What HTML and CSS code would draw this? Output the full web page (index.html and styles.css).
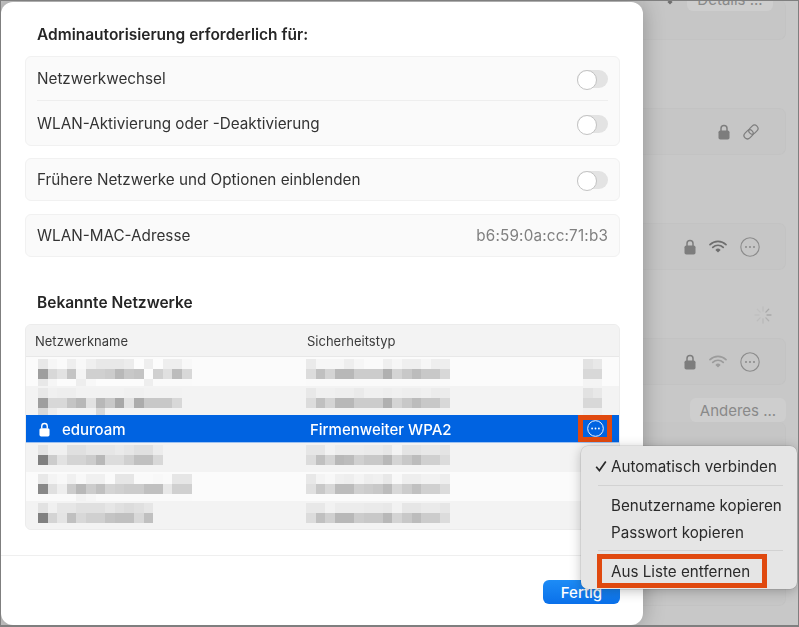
FILE: index.html
```html
<!DOCTYPE html>
<html lang="de">
<head>
<meta charset="utf-8">
<title>WLAN</title>
<link rel="stylesheet" href="styles.css">
</head>
<body>
<svg class="defs" width="0" height="0" aria-hidden="true">
  <symbol id="lock" viewBox="0 0 12 16"><path d="M3 7V4.4a3 3 0 0 1 6 0V7" fill="none" stroke="currentColor" stroke-width="1.5"/><rect x="0.5" y="6.5" width="11" height="9" rx="1.8" fill="currentColor"/></symbol>
  <symbol id="wifi" viewBox="0 0 18 13"><path d="M1 4.6a11.4 11.4 0 0 1 16 0M3.8 7.4a7.4 7.4 0 0 1 10.4 0" fill="none" stroke="currentColor" stroke-width="1.7" stroke-linecap="round"/><path d="M6.4 9.9a3.7 3.7 0 0 1 5.2 0L9 12.6z" fill="currentColor"/></symbol>
  <symbol id="more" viewBox="0 0 20 20"><circle cx="10" cy="10" r="9.2" fill="none" stroke="currentColor" stroke-width="1.1"/><circle cx="6" cy="10" r="1.05" fill="currentColor"/><circle cx="10" cy="10" r="1.05" fill="currentColor"/><circle cx="14" cy="10" r="1.05" fill="currentColor"/></symbol>
</svg>
<div class="stage">
  <main class="sheet">
    <h2 class="heading">Adminautorisierung erforderlich für:</h2>
    <section class="card card-first">
      <div class="row"><span>Netzwerkwechsel</span><span class="toggle"></span></div>
      <div class="row row-ruled"><span>WLAN-Aktivierung oder -Deaktivierung</span><span class="toggle"></span></div>
    </section>
    <section class="card card-second">
      <div class="row"><span>Frühere Netzwerke und Optionen einblenden</span><span class="toggle"></span></div>
    </section>
    <section class="card">
      <div class="row"><span>WLAN-MAC-Adresse</span><span class="muted">b6:59:0a:cc:71:b3</span></div>
    </section>
    <h2 class="heading heading-known">Bekannte Netzwerke</h2>
    <section class="table">
      <div class="thead"><span>Netzwerkname</span><span>Sicherheitstyp</span></div>
      <div class="tr tr-light">
        <div class="mosaic m-name" data-rows="e8 f6 fa ee f8 ef e8 e8 e8 ec fc ee fc ee ee f8|9e d8 e2 c4 f4 d0 d0 cc b8 c8 c4 fc d0 e0 bc d8|e8 f6 fc fc ee f8 fc fc fc fc fc ee fa fa fa fa"></div>
        <div class="mosaic" data-rows="ea f6 f6 f6 ee f6 fa fa ef f6 ef ef f6 ee ee|dc c0 d4 b8 b8 cc cc cc b0 d4 c8 bc c8 c8 d8|fa fa fa fa fa fa fa fa fa fa fa fa fa fa fa"></div>
        <div class="mosaic" data-rows="e2 e8|d8 d8|f4 f4"></div>
      </div>
      <div class="tr">
        <div class="mosaic m-name" data-rows="e8 f0 ee ee f2 f2 f2 f2 f2 f0 f0 f2 f2 f2 f2|9e d8 d8 c4 b8 e2 b8 c8 a8 e2 ac c8 c8 c8 d8|d8 ec f3 f3 f3 f3 d8 f3 f3 f3 f3 f3 f3 f3 f3"></div>
        <div class="mosaic" data-rows="e8 f0 f0 ee ee ea f0 f0 ee f0 ee ee f0 ec ec|dc c0 d4 b8 b8 cc cc cc b0 d4 c8 bc c8 c8 d8"></div>
        <div class="mosaic" data-rows="e2 e8|d8 d8|ee ee"></div>
      </div>
      <div class="tr tr-selected">
        <div class="cell-name"><svg class="ico-lock-white"><use href="#lock"/></svg><span>eduroam</span></div>
        <div class="cell-type">Firmenweiter WPA2</div>
        <div class="more-flag"><svg class="ico-more-white"><use href="#more"/></svg></div>
      </div>
      <div class="tr">
        <div class="mosaic m-name" data-rows="e4 f0 f0 e0 e0 e6 e6 e6 ea e6 e0 e0 ec|80 cc e2 d4 d4 cc b8 dc dc d0 c0 c0 d8"></div>
        <div class="mosaic" data-rows="e6 e6 f2 ec ec ec ea ea e6 f3 e4 e4 e8 e8 e4|dc c0 d4 b8 bc d0 c8 c8 b8 d4 c8 bc d0 d0 dc"></div>
      </div>
      <div class="tr tr-light">
        <div class="mosaic m-name" data-rows="e8 f4 f8 f0 f8 f0 f0 fa e6 e6 fa fa f8 fa e6 e6|88 e0 ee cc b8 cc c0 d4 d0 cc cc c0 c0 e8 d0 d0|fa fa fa fa f2 f6 fa fa fa fa fa fa fa fa fa fa"></div>
        <div class="mosaic" data-rows="e8 f4 f8 f0 ee f4 ee f0 e8 f8 ee ee f2 f2 ee|e0 c8 d8 bc bc d0 cc c8 bc d8 cc c0 d0 d0 dc"></div>
      </div>
      <div class="tr">
        <div class="mosaic m-name" data-rows="e2 f0 e6 e6 e0 e0 e0 e6 e0 dc e0 e6|80 d4 e4 c0 d8 d0 d0 c4 c0 c0 d8 c0"></div>
        <div class="mosaic" data-rows="e8 e8 f2 ec ec ec ea ea e8 f2 e6 e6 ea ea e6|dc c0 d0 b8 b8 cc c8 c8 b8 d4 c8 bc cc cc dc"></div>
      </div>
    </section>
    <footer class="foot"><button class="done" type="button">Fertig</button></footer>
  </main>

  <aside class="backdrop">
    <div class="panel panel-top">
      <svg class="ico-wifi ico-wifi-top"><use href="#wifi"/></svg>
      <span class="bg-btn bg-btn-details">Details ...</span>
    </div>
    <div class="panel panel-icons panel-2">
      <svg class="ico-lock"><use href="#lock"/></svg>
      <svg class="ico-link" viewBox="0 0 18 18"><g fill="none" stroke="currentColor" stroke-width="1.2" transform="rotate(-45 9 9)"><rect x="0.6" y="5.6" width="10" height="6.8" rx="3.4"/><rect x="7.4" y="5.6" width="10" height="6.8" rx="3.4"/></g></svg>
    </div>
    <div class="panel panel-icons panel-3">
      <svg class="ico-lock"><use href="#lock"/></svg>
      <svg class="ico-wifi"><use href="#wifi"/></svg>
      <svg class="ico-more"><use href="#more"/></svg>
    </div>
    <div class="spinner-wrap">
      <svg class="spinner" viewBox="0 0 18 18"><g stroke-width="1.3" stroke-linecap="round" fill="none"><path d="M9 1v4" stroke="#bdbdbd"/><path d="M14.7 3.3l-2.8 2.8" stroke="#a8a8a8"/><path d="M17 9h-4" stroke="#a8a8a8"/><path d="M14.7 14.7l-2.8-2.8" stroke="#b0b0b0"/><path d="M9 17v-4" stroke="#b8b8b8"/><path d="M3.3 14.7l2.8-2.8" stroke="#bdbdbd"/><path d="M1 9h4" stroke="#c0c0c0"/><path d="M3.3 3.3l2.8 2.8" stroke="#c0c0c0"/></g></svg>
    </div>
    <div class="panel panel-icons panel-4">
      <svg class="ico-lock"><use href="#lock"/></svg>
      <svg class="ico-wifi ico-wifi-faint"><use href="#wifi"/></svg>
      <svg class="ico-more"><use href="#more"/></svg>
    </div>
    <div class="bg-actions"><span class="bg-btn bg-btn-other">Anderes ...</span></div>
    <div class="panel panel-bottom"></div>
  </aside>

  <nav class="menu">
    <div class="mi mi-first"><svg class="check" viewBox="0 0 12 12"><path d="M1.2 6.8L4.4 10.6L10.8 1.4" fill="none" stroke="currentColor" stroke-width="1.7"/></svg>Automatisch verbinden</div>
    <hr class="sep sep-a">
    <div class="mi">Benutzername kopieren</div>
    <div class="mi">Passwort kopieren</div>
    <hr class="sep sep-b">
    <div class="mi mi-flagged">Aus Liste entfernen</div>
  </nav>
</div>
<script src="mosaic.js"></script>
</body>
</html>
```
FILE: styles.css
```css
* { box-sizing: border-box; }
html, body { margin: 0; padding: 0; }
body {
  width: 799px;
  height: 627px;
  overflow: hidden;
  font-family: Inter, "Liberation Sans", sans-serif;
  color: #2b2b2b;
  background: #c8c8c8;
}
.defs { position: absolute; }
.stage {
  position: relative;
  display: flex;
  width: 799px;
  height: 627px;
  overflow: hidden;
  border: 1px solid #7f7f7f;
  border-bottom-width: 2px;
  filter: blur(0.35px);
}

/* Sheet */
.sheet {
  position: relative;
  z-index: 2;
  flex: none;
  width: 642px;
  margin-top: 1px;
  padding: 23px 23px 0 24px;
  background: #fff;
  border-radius: 12px;
  box-shadow: 0 0 22px rgba(0, 0, 0, 0.28);
}
.heading {
  margin: 0;
  height: 20px;
  padding-left: 12px;
  font-size: 15.5px;
  line-height: 20px;
  font-weight: 600;
  color: #262626;
}
.heading-known { margin-top: 36px; }
.card {
  margin-top: 13px;
  padding: 0 11px;
  background: #fafafa;
  border: 1px solid #f1f1f1;
  border-radius: 6px;
}
.card-first { margin-top: 11px; }
.card-second { margin-top: 12px; }
.row {
  display: flex;
  align-items: center;
  justify-content: space-between;
  height: 41px;
  font-size: 15.25px;
  color: #333;
}
.card-first .row { height: 43px; }
.card-first .row-ruled { height: 45px; padding-top: 1px; }
.row-ruled { border-top: 1px solid #eeeeee; }
.muted { color: #808080; letter-spacing: 0.18px; }
.toggle {
  position: relative;
  width: 31px;
  height: 18px;
  background: #e3e3e3;
  border-radius: 9px;
}
.toggle::after {
  content: "";
  position: absolute;
  left: 0;
  top: 0;
  width: 18px;
  height: 18px;
  background: #fff;
  border: 1px solid #c2c2c2;
  border-radius: 50%;
}

/* Table */
.table {
  margin-top: 11px;
  height: 206px;
  background: #f3f3f3;
  border: 1px solid #ececec;
  border-radius: 6px;
  overflow: hidden;
}
.thead {
  display: grid;
  grid-template-columns: 272px 1fr;
  align-items: center;
  height: 32px;
  padding-left: 9px;
  font-size: 13px;
  font-weight: 400;
  color: #3a3a3a;
  background: #f3f3f3;
  border-bottom: 1px solid #e8e8e8;
}
.tr {
  display: grid;
  grid-template-columns: 280px 277px auto;
  align-items: start;
  height: 29px;
  overflow: hidden;
  background: #f3f3f3;
}
.tr-light { background: #fbfbfb; }
.mosaic { padding-top: 2px; }
.m-name { margin-left: 12px; }
.mo-row { display: flex; height: 10px; }
.mo-row i { flex: none; width: 9.6px; height: 10px; }
.tr-selected {
  height: 28px;
  align-items: center;
  color: #fff;
  background: #0063e1;
  border-bottom: 1px solid #9cc1f2;
  font-size: 15px;
  font-weight: 500;
}
.cell-name { display: flex; align-items: center; padding: 1px 0 0 13px; }
.cell-name span { margin-left: 12px; }
.cell-type { padding: 1px 0 0 4px; }
.more-flag {
  display: flex;
  align-items: center;
  justify-content: center;
  width: 34px;
  height: 27px;
  margin-left: -5px;
  border: 5px solid #e0490f;
}
.ico-lock-white { width: 11px; height: 15px; color: #fff; }
.ico-more-white { width: 17px; height: 17px; color: #fff; }

/* Footer */
.foot {
  display: flex;
  justify-content: flex-end;
  margin: 25px -23px 0 -24px;
  padding: 24px 23px 0 0;
  border-top: 1px solid #efefef;
}
.done {
  width: 77px;
  height: 24px;
  padding: 0;
  font: 500 15px Inter, "Liberation Sans", sans-serif;
  color: #fff;
  background: linear-gradient(#1d8cf6, #0a70ea);
  border: 0;
  border-radius: 6px;
}

/* Dimmed window behind */
.backdrop {
  flex: 1;
  display: flex;
  flex-direction: column;
  padding-right: 12px;
  min-width: 0;
  color: #7d7d7d;
}
.panel {
  flex: none;
  background: #c6c6c6;
  border: 1px solid #c3c3c3;
  border-left: 0;
  border-radius: 0 7px 7px 0;
}
.panel-top {
  display: flex;
  align-items: flex-start;
  height: 40px;
  margin-top: -1px;
  padding-left: 18px;
  border-top: 0;
}
.panel-icons {
  display: flex;
  align-items: center;
  justify-content: flex-end;
  height: 47px;
  padding-right: 25px;
}
.panel-2 { margin-top: 68px; gap: 12px; }
.panel-3 { margin-top: 68px; gap: 13px; }
.panel-4 { margin-top: 0; gap: 13px; }
.ico-lock { width: 12px; height: 16px; }
.ico-wifi { width: 18px; height: 13px; color: #6e6e6e; }
.ico-wifi-faint { color: #9c9c9c; }
.ico-wifi-top { margin-top: -8px; }
.ico-more { width: 20px; height: 20px; color: #8c8c8c; }
.ico-link { width: 18px; height: 18px; color: #7d7d7d; }
.spinner-wrap {
  display: flex;
  justify-content: flex-end;
  height: 68px;
  padding: 36px 14px 0 0;
}
.spinner { width: 18px; height: 18px; }
.bg-actions {
  display: flex;
  justify-content: flex-end;
  margin-top: 13px;
}
.bg-btn {
  display: flex;
  align-items: center;
  justify-content: center;
  height: 24px;
  font-size: 15px;
  color: #898989;
  background: #cecece;
  border-radius: 6px;
}
.bg-btn-details { width: 86px; margin: -13px 0 0 8px; }
.bg-btn-other { width: 96px; }
.panel-bottom { height: 184px; margin-top: 0; border-top: 0; }

/* Context menu */
.menu {
  position: absolute;
  z-index: 3;
  left: 580px;
  top: 445px;
  width: 216px;
  height: 143px;
  padding: 8px 0 0 16px;
  font-size: 15.2px;
  color: #2a2a2a;
  background: #e5e5e5;
  border-radius: 7px;
  box-shadow: 0 2px 12px rgba(0, 0, 0, 0.25), 0 0 0 0.5px rgba(0, 0, 0, 0.14);
}
.mi {
  position: relative;
  display: flex;
  align-items: center;
  height: 27px;
  padding-left: 14px;
  white-space: nowrap;
}
.mi-first { height: 24px; }
.check { position: absolute; left: -2px; top: 6px; width: 12px; height: 12px; }
.sep {
  width: 185px;
  height: 1px;
  margin: 0;
  background: #d2d2d2;
  border: 0;
}
.sep-a { margin: 7px 0 6px 1px; }
.sep-b { margin: 4px 0 3px 1px; }
.mi-flagged {
  width: 170px;
  height: 34px;
  padding-left: 9px;
  border: 5px solid #e0490f;
}
```
FILE: mosaic.js
```js
// Builds the pixelated (redacted) table cells from their grey values.
document.querySelectorAll('.mosaic').forEach(function (box) {
  box.dataset.rows.split('|').forEach(function (line) {
    var row = document.createElement('div');
    row.className = 'mo-row';
    line.split(' ').forEach(function (v) {
      var cell = document.createElement('i');
      cell.style.background = '#' + v + v + v;
      row.appendChild(cell);
    });
    box.appendChild(row);
  });
});
```
